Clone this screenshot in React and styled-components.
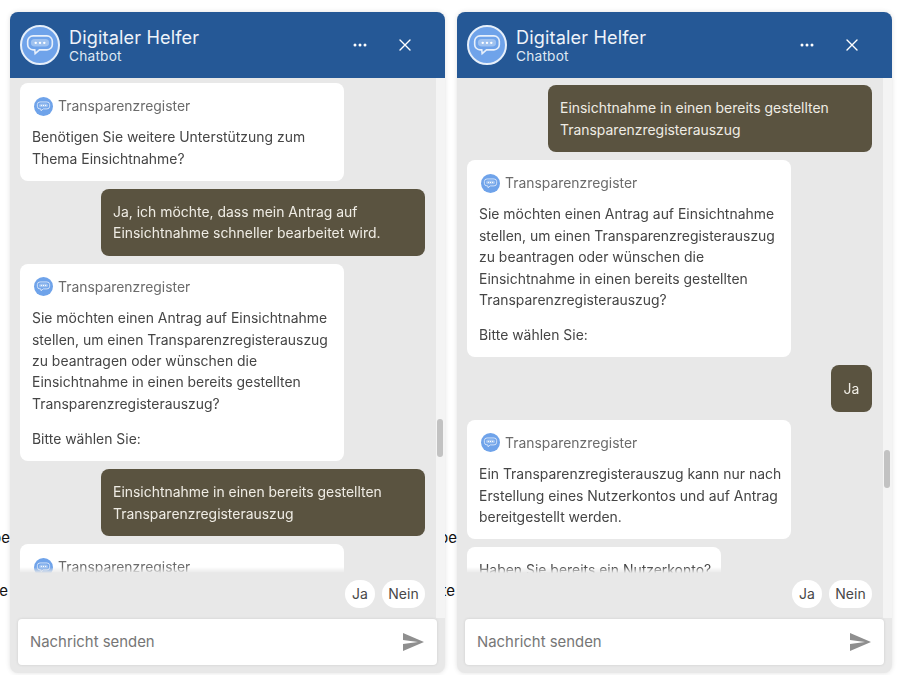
import React from "react";
import styled, { createGlobalStyle } from "styled-components";

const Global = createGlobalStyle`
  html, body { margin: 0; padding: 0; background: #fff; }
  body { font-family: Inter, "Noto Sans", sans-serif; width: 900px; height: 675px; overflow: hidden; }
`;
const Page = styled.div`
  display: flex;
  width: 900px;
  height: 675px;
  padding-top: 12px;
  box-sizing: border-box;
`;
const Gutter = styled.div`
  width: ${(p) => p.$w}px;
  flex: none;
  overflow: hidden;
  display: flex;
  flex-direction: column;
  align-items: flex-end;
  gap: 33px;
  padding-top: 516px;
  font-size: 15px;
  line-height: 20px;
  color: #111;
`;
const Stray = styled.div`
  white-space: nowrap;
  margin-right: ${(p) => p.$mr || 0}px;
`;
const Panel = styled.section`
  width: 435px;
  height: 661px;
  flex: none;
  display: flex;
  flex-direction: column;
  background: #e8e8e8;
  border-radius: 8px;
  box-shadow: 0 0 5px rgba(0, 0, 0, 0.12);
  position: relative;
  z-index: 1;
`;
const Header = styled.header`
  height: 66px;
  flex: none;
  display: flex;
  align-items: center;
  background: #255896;
  border-radius: 8px 8px 0 0;
  color: #fff;
  padding: 0 32px 0 10px;
  box-sizing: border-box;
`;
const Avatar = styled.div`
  width: 40px;
  height: 40px;
  flex: none;
  border-radius: 50%;
  background: #6fa3ea;
  border: 2px solid #e6effa;
  box-sizing: border-box;
  display: flex;
  align-items: center;
  justify-content: center;
`;
const Titles = styled.div`
  margin-left: 9px;
  flex: 1;
  display: flex;
  flex-direction: column;
`;
const Title = styled.div`
  font-size: 18.1px;
  line-height: 21px;
  letter-spacing: 0.15px;
  color: #eef3f9;
`;
const Sub = styled.div`
  font-size: 13.7px;
  line-height: 16px;
  letter-spacing: 0.2px;
  color: #dfe8f3;
`;
const HeadButton = styled.button`
  border: 0;
  background: none;
  padding: 0;
  width: 16px;
  height: 16px;
  margin-left: ${(p) => p.$ml}px;
  color: #fff;
  display: flex;
  align-items: center;
  justify-content: center;
`;
const Middle = styled.div`
  height: 540px;
  flex: none;
  display: flex;
`;
const Column = styled.div`
  width: 426px;
  flex: none;
  display: flex;
  flex-direction: column;
`;
const Track = styled.div`
  flex: 1;
  background: #f4f4f4;
  padding: ${(p) => p.$top}px 2px 0 1px;
`;
const Thumb = styled.div`
  height: 38px;
  border-radius: 3px;
  background: #c2c2c2;
`;
const Messages = styled.div`
  height: 495px;
  flex: none;
  overflow: hidden;
  display: flex;
  flex-direction: column;
  gap: 8px;
  padding: ${(p) => p.$top}px 11px 0 10px;
  box-sizing: border-box;
  -webkit-mask-image: linear-gradient(to bottom, #000 calc(100% - 6px), transparent 100%);
  mask-image: linear-gradient(to bottom, #000 calc(100% - 6px), transparent 100%);
`;
const BotBubble = styled.article`
  flex: none;
  align-self: flex-start;
  width: ${(p) => p.$w || 324}px;
  background: #fff;
  border-radius: 8px;
  padding: ${(p) => (p.$plain ? "12px 8px 12px 12px" : "11px 8px 11.6px 12px")};
  box-sizing: border-box;
  color: #454545;
`;
const BotHead = styled.div`
  display: flex;
  align-items: center;
  height: 24px;
  margin: 0 0 8.4px 2px;
  gap: 5px;
  font-size: 13.9px;
  color: #6b6b6b;
`;
const MiniIcon = styled.div`
  width: 19px;
  height: 19px;
  border-radius: 50%;
  background: #6fa3ea;
  display: flex;
  align-items: center;
  justify-content: center;
`;
const Para = styled.p`
  margin: 0 0 14px;
  font-size: 13.95px;
  line-height: 21.4px;
  &:last-child { margin-bottom: 0; }
`;
const UserBubble = styled.article`
  flex: none;
  align-self: flex-end;
  width: ${(p) => p.$w || 324}px;
  background: #5a5340;
  border-radius: 8px;
  padding: ${(p) => p.$py || 12}px 12px;
  box-sizing: border-box;
  color: #efece4;
  font-size: 13.95px;
  line-height: 21.5px;
  text-align: ${(p) => (p.$center ? "center" : "left")};
`;
const Replies = styled.div`
  flex: 1;
  display: flex;
  justify-content: flex-end;
  align-items: flex-start;
  gap: 7px;
  padding: 7px 11px 0 0;
`;
const Reply = styled.button`
  height: 28px;
  width: ${(p) => p.$w}px;
  padding: 0 0 2px;
  border: 0;
  border-radius: 14px;
  background: #fff;
  color: #484848;
  font: 14px Inter, sans-serif;
`;
const Composer = styled.div`
  height: 46px;
  flex: none;
  margin: 1px 8px 0;
  background: #fff;
  border-radius: 4px;
  box-shadow: 0 0 3px rgba(0, 0, 0, 0.12);
  display: flex;
  align-items: center;
  justify-content: space-between;
  padding: 0 12px;
  position: relative;
`;
const Placeholder = styled.span`
  font-size: 14.9px;
  color: #767676;
  margin-bottom: 1px;
`;

const ChatGlyph = ({ size, stroke = "#e8f0fb" }) => (
  <svg width={size} height={size} viewBox="0 0 28 28" fill="none">
    <path d="M7.500 5.500h13A5 5 0 0 1 25.500 10.500v3a5 5 0 0 1-5 5H13.500l-4 3.500-.4-3.500H7.500a5 5 0 0 1-5-5v-3a5 5 0 0 1 5-5z" stroke={stroke} strokeWidth="1.500" />
    <rect x="5.500" y="8.500" width="17" height="7" rx="3.500" fill={stroke} opacity=".4" />
    <circle cx="10" cy="12" r="1.100" fill="#fff" />
    <circle cx="14" cy="12" r="1.100" fill="#fff" />
    <circle cx="18" cy="12" r="1.100" fill="#fff" />
  </svg>
);

const Bot = ({ w, children }) => (
  <BotBubble $w={w}>
    <BotHead>
      <MiniIcon><ChatGlyph size={15} /></MiniIcon>
      Transparenzregister
    </BotHead>
    {children}
  </BotBubble>
);

const Widget = ({ thumbTop, msgTop, children }) => (
  <Panel>
    <Header>
      <Avatar><ChatGlyph size={30} /></Avatar>
      <Titles>
        <Title>Digitaler Helfer</Title>
        <Sub>Chatbot</Sub>
      </Titles>
      <HeadButton $ml={0} aria-label="Menü">
        <svg width="14" height="4" viewBox="0 0 14 4" fill="currentColor"><circle cx="2" cy="2" r="1.500" /><circle cx="7" cy="2" r="1.500" /><circle cx="12" cy="2" r="1.500" /></svg>
      </HeadButton>
      <HeadButton $ml={29} aria-label="Schließen">
        <svg width="12" height="12" viewBox="0 0 12 12" stroke="currentColor" strokeWidth="1.400" strokeLinecap="round"><path d="M1 1l10 10M11 1L1 11" /></svg>
      </HeadButton>
    </Header>
    <Middle>
      <Column>
        <Messages $top={msgTop}>{children}</Messages>
        <Replies>
          <Reply $w={30}>Ja</Reply>
          <Reply $w={43}>Nein</Reply>
        </Replies>
      </Column>
      <Track $top={thumbTop}><Thumb /></Track>
    </Middle>
    <Composer>
      <Placeholder>Nachricht senden</Placeholder>
      <svg width="24" height="24" viewBox="0 0 24 24" fill="#8f8f8f"><path d="M2.010 21L23 12 2.010 3 2 10l15 2-15 2z" /></svg>
    </Composer>
  </Panel>
);

const Margin = () => (
  <>
    <Stray>Angabe</Stray>
    <Stray $mr={2}>Seite</Stray>
  </>
);

export default function App() {
  return (
    <Page>
      <Global />
      <Gutter $w={10}><Margin /></Gutter>
      <Widget thumbTop={341} msgTop={5}>
        <Bot>
          <Para>Benötigen Sie weitere Unterstützung zum Thema Einsichtnahme?</Para>
        </Bot>
        <UserBubble>Ja, ich möchte, dass mein Antrag auf Einsichtnahme schneller bearbeitet wird.</UserBubble>
        <Bot>
          <Para>Sie möchten einen Antrag auf Einsichtnahme stellen, um einen Transparenzregisterauszug zu beantragen oder wünschen die Einsichtnahme in einen bereits gestellten Transparenzregisterauszug?</Para>
          <Para>Bitte wählen Sie:</Para>
        </Bot>
        <UserBubble>Einsichtnahme in einen bereits gestellten Transparenzregisterauszug</UserBubble>
        <Bot><Para>Ein Transparenzregisterauszug kann nur nach</Para></Bot>
      </Widget>
      <Gutter $w={12}><Margin /></Gutter>
      <Widget thumbTop={372} msgTop={7}>
        <UserBubble>Einsichtnahme in einen bereits gestellten Transparenzregisterauszug</UserBubble>
        <Bot>
          <Para>Sie möchten einen Antrag auf Einsichtnahme stellen, um einen Transparenzregisterauszug zu beantragen oder wünschen die Einsichtnahme in einen bereits gestellten Transparenzregisterauszug?</Para>
          <Para>Bitte wählen Sie:</Para>
        </Bot>
        <UserBubble $w={41} $center $py={12.5}>Ja</UserBubble>
        <Bot>
          <Para>Ein Transparenzregisterauszug kann nur nach Erstellung eines Nutzerkontos und auf Antrag bereitgestellt werden.</Para>
        </Bot>
        <BotBubble $w={254} $plain>
          <Para>Haben Sie bereits ein Nutzerkonto?</Para>
        </BotBubble>
      </Widget>
    </Page>
  );
}
